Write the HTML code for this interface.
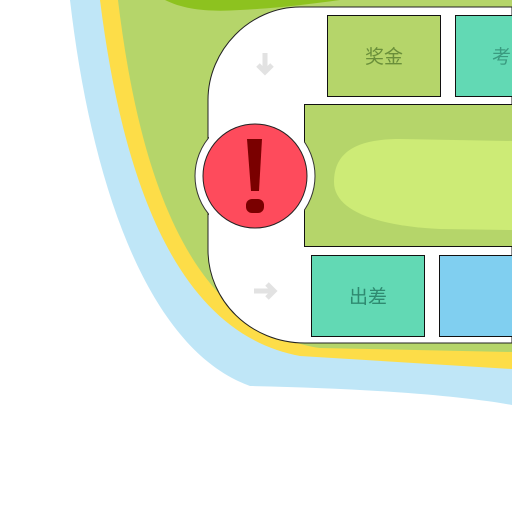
<!DOCTYPE html>
<html><head><meta charset="utf-8"><style>
html,body{margin:0;padding:0;background:#fff;width:512px;height:512px;overflow:hidden}
svg{display:block}
text{font-family:"Liberation Sans","Noto Sans CJK SC",sans-serif;font-size:19px}
</style></head><body>
<svg width="512" height="512" viewBox="0 0 512 512">
<path d="M70,0 C92,190 150,350 250,386 C350,388 450,394 512,405 L512,0 Z" fill="#bfe6f7"/>
<path d="M100,0 C125,200 185,335 300,356 L512,369 L512,0 Z" fill="#fddd48"/>
<path d="M118,0 C142,200 200,330 320,348 L512,352 L512,0 Z" fill="#b5d56a"/>
<path d="M165,0 C185,10 210,12 240,10 C280,8 310,4 340,0 Z" fill="#8dc21f"/>
<path d="M512,7 L300,7 C250,7 208,50 208,100 L208,250 C208,300 250,343 305,343 L512,343 Z" fill="#fff" stroke="#222" stroke-width="1"/>
<rect x="327.5" y="15.5" width="113" height="81" fill="#b5d56a" stroke="#111"/>
<rect x="455.5" y="15.5" width="70" height="81" fill="#62d9b4" stroke="#111"/>
<rect x="304.5" y="104.5" width="220" height="142" fill="#b5d56a" stroke="#111"/>
<path d="M334,182 C334,150 360,139 400,139 L512,141 L512,230 L440,229 C375,226 334,210 334,182 Z" fill="#cdeb76"/>
<rect x="311.5" y="255.5" width="113" height="81" fill="#62d9b4" stroke="#111"/>
<rect x="439.5" y="255.5" width="90" height="81" fill="#80cff0" stroke="#111"/>
<text x="384" y="63" text-anchor="middle" fill="#6a8f3a">奖金</text>
<text x="492" y="63" fill="#3a9b80">考</text>
<text x="368" y="303" text-anchor="middle" fill="#2f8a70">出差</text>
<path d="M265,53 L265,72 M258,65 L265,72 L272,65" stroke="#e2e2e2" stroke-width="5" fill="none"/>
<path d="M254,291 L274,291 M267,284 L274,291 L267,298" stroke="#e2e2e2" stroke-width="5" fill="none"/>
<circle cx="255" cy="176" r="60" fill="#fff" stroke="#333"/>
<rect x="209" y="110" width="95" height="135" fill="#fff"/>
<circle cx="255" cy="176" r="52" fill="#fe4b5c" stroke="#222"/>
<path d="M247,139 L262,139 L259,191 L251,191 Z" fill="#7a0000"/>
<rect x="246" y="199" width="18" height="14" rx="6" fill="#7a0000"/>
</svg>
</body></html>
